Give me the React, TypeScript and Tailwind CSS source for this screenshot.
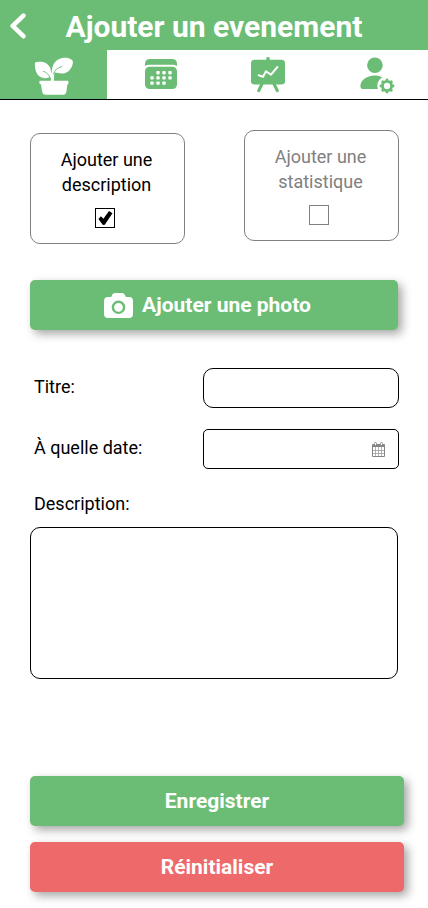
import React from "react";

function PlantIcon() {
  return (
    <svg width="40" height="40" viewBox="0 0 40 40" fill="white">
      <path d="M1 5.6C4 4.3 9.4 4.4 12.9 6.8C15.6 8.8 16.9 11.6 17 14.8L17.5 16.5C17.8 14 17.9 11 19.1 8.2C21.2 3 26.6.7 31.2.7C35 .7 38.9 2.3 38.9 5C38.8 10.2 34.8 16.3 28.6 16.5C25.4 16.6 22.6 16 20.6 15.3C19.9 18 20 21 20 24.5L16.9 24.7C16.9 22.5 16.6 21 16 19.7C12.8 21.8 8.2 21.7 5 19.1C1.6 16.1.6 10.4 1 5.6Z" />
      <path d="M9.4 14.4C12.4 15 14.9 17.4 16.3 21.4M28 9.6C23.4 10.6 20.6 13.2 19.4 17" fill="none" stroke="#6bbd76" strokeWidth=".9" strokeLinecap="round" />
      <path d="M6.2 23.7H33.6Q34.5 23.7 34.5 24.7V26Q34.5 27.2 33.4 27.2L32.4 34.5Q31.9 37.8 29 37.8H11.5Q8.7 37.8 8.2 34.5L6.9 27.2Q5.4 27.2 5.4 26V24.7Q5.4 23.7 6.2 23.7Z" />
    </svg>
  );
}

function CalendarIcon() {
  const rows = [
    [13, 19, 25],
    [7, 13, 19, 25],
    [7, 13, 19],
  ];
  return (
    <svg width="32" height="30" viewBox="0 0 32 30" fill="#6bbd76">
      <path d="M0 7V5Q0 0 5 0H27Q32 0 32 5V7Q30.5 5.8 27 5.8H5Q1.5 5.8 0 7Z" />
      <rect y="7.8" width="32" height="22.2" rx="4.5" />
      {rows.map((row, r) =>
        row.map((x) => <rect key={`${r}-${x}`} x={x - 1.7} y={12 + r * 5.2} width="3.4" height="3.4" rx=".8" fill="white" />)
      )}
    </svg>
  );
}

function BoardIcon() {
  return (
    <svg width="34" height="36" viewBox="0 0 34 36" fill="#6bbd76">
      <rect x="15.3" y="0" width="3.4" height="6" rx="1.4" />
      <rect y="2.8" width="34" height="24.7" rx="3.5" />
      <path d="M11.2 26.5L7.7 33.6M22.8 26.5L26.3 33.6" stroke="#6bbd76" strokeWidth="3.2" strokeLinecap="round" />
      <path d="M7.7 18.3L12 19.7L15 14.2L20 17.7L26.4 10" fill="none" stroke="white" strokeWidth="2" strokeLinecap="round" strokeLinejoin="round" />
    </svg>
  );
}

function UserGearIcon() {
  return (
    <svg width="36" height="38" viewBox="0 0 36 38" fill="#6bbd76">
      <circle cx="14.9" cy="8.3" r="7.8" />
      <path d="M2.8 32H18C16.4 27.5 18 23 22.2 20.4C20 19 17.6 18.6 14.6 18.6C6.4 18.6.4 23.7.4 29Q.4 32 2.8 32Z" />
      <circle cx="27" cy="29" r="4.6" fill="none" stroke="#6bbd76" strokeWidth="2.9" />
      <path
        d="M27 23.2V23M27 34.8V35M21.2 29H21M32.8 29H33M22.9 24.9L22.7 24.7M31.1 24.9L31.3 24.7M22.9 33.1L22.7 33.3M31.1 33.1L31.3 33.3"
        stroke="#6bbd76"
        strokeWidth="2.9"
        strokeLinecap="round"
      />
    </svg>
  );
}

function CameraIcon() {
  return (
    <svg width="29" height="25" viewBox="0 0 29 25">
      <path d="M4 4H7.2L8.2 1.8Q9 0 11 0H18Q20 0 20.8 1.8L21.8 4H25Q29 4 29 8V21Q29 25 25 25H4Q0 25 0 21V8Q0 4 4 4Z" fill="white" />
      <circle cx="14.5" cy="14.3" r="5.6" fill="none" stroke="#6bbd76" strokeWidth="2.4" />
    </svg>
  );
}

function DateIcon() {
  return (
    <svg width="13" height="15" viewBox="0 0 13 15" fill="none" stroke="#858585">
      <path d="M.5 4.5V14.5H12.5V4.5" />
      <path d="M0 2.6Q0 2 1 2H12Q13 2 13 2.6V5H0Z" fill="#858585" stroke="none" />
      <path d="M3.5 5V14M6.5 5V14M9.5 5V14M1 8.5H12M1 11.5H12" strokeWidth=".6" />
      <rect x="2.5" y=".5" width="2" height="3" rx="1" fill="white" strokeWidth=".9" />
      <rect x="8.5" y=".5" width="2" height="3" rx="1" fill="white" strokeWidth=".9" />
    </svg>
  );
}

function Choice({ label, kind, checked }: { label: string; kind: string; checked?: boolean }) {
  return (
    <label
      className={`flex h-[111px] w-[155px] flex-col items-center rounded-[10px] border border-[#808080] pt-[13px] text-center text-lg leading-[25px] ${checked ? "text-black" : "text-[#808080]"}`}
    >
      <span className="-ml-[2px]">{label}<br />{kind}</span>
      <span className="mt-[11px] mr-[5px] flex size-5 items-center justify-center border border-current">
        {checked && (
          <svg width="15" height="14" viewBox="0 0 15 14">
            <path d="M.4 7.9L2.9 5.2L5.4 7.7L11 0L14.5 2.3L6.8 13.8L4.9 13.9Z" />
          </svg>
        )}
      </span>
    </label>
  );
}

const button = "flex h-[50px] shrink-0 items-center justify-center rounded-[5px] text-[21px] font-bold text-white shadow-[4px_4px_10px_rgba(0,0,0,0.35)]";

export default function App() {
  return (
    <div className="flex h-[908px] w-[428px] flex-col overflow-hidden bg-white font-[Roboto,sans-serif] text-lg text-black">
      <header className="flex h-[50px] shrink-0 items-center bg-[#6bbd76] pl-[10px] text-white">
        <svg className="mt-px" width="16" height="26" viewBox="0 0 16 26" fill="none" stroke="white" strokeWidth="4.6" strokeLinecap="round" strokeLinejoin="round">
          <path d="M13.4 2.6L2.7 12.9L13.4 23.2" />
        </svg>
        <h1 className="mt-[3px] ml-[39.5px] text-[30px] leading-[40px] font-bold whitespace-nowrap">Ajouter un evenement</h1>
      </header>
      <nav className="grid h-[50px] shrink-0 grid-cols-4 border-b border-black">
        <a className="flex justify-center bg-[#6bbd76] pt-[7px] pl-px"><PlantIcon /></a>
        <a className="flex justify-center pt-[9px]"><CalendarIcon /></a>
        <a className="flex justify-center pt-[7px]"><BoardIcon /></a>
        <a className="flex justify-center pt-[7px] pl-[6px]"><UserGearIcon /></a>
      </nav>
      <main className="flex flex-1 flex-col pt-[30px] pr-[29px] pl-[30px]">
        <div className="flex items-start justify-between">
          <div className="pt-[3px]"><Choice label="Ajouter une" kind="description" checked /></div>
          <Choice label="Ajouter une" kind="statistique" />
        </div>
        <button className={`${button} mt-9 mr-px gap-[9px] bg-[#6bbd76] pr-[13px]`}>
          <CameraIcon />
          <span>Ajouter une photo</span>
        </button>
        <label className="mt-[38px] flex h-10 items-center justify-between pl-1">
          <span className="-mt-[2px]">Titre:</span>
          <input className="h-10 w-[196px] rounded-[10px] border border-black" />
        </label>
        <label className="mt-[21px] flex h-10 items-center justify-between pl-1">
          <span className="-mt-[2px]">À quelle date:</span>
          <span className="flex h-10 w-[196px] items-center justify-end rounded-[5px] border border-black pr-[13px]"><DateIcon /></span>
        </label>
        <label className="mt-[21px] mr-px flex flex-col">
          <span className="h-[37px] pl-1">Description:</span>
          <textarea className="h-[152px] resize-none rounded-[10px] border border-black" />
        </label>
        <div className="mt-[97px] -mr-[5px] flex flex-col gap-4">
          <button className={`${button} bg-[#6bbd76]`}>Enregistrer</button>
          <button className={`${button} bg-[#ee6969]`}>Réinitialiser</button>
        </div>
      </main>
    </div>
  );
}
